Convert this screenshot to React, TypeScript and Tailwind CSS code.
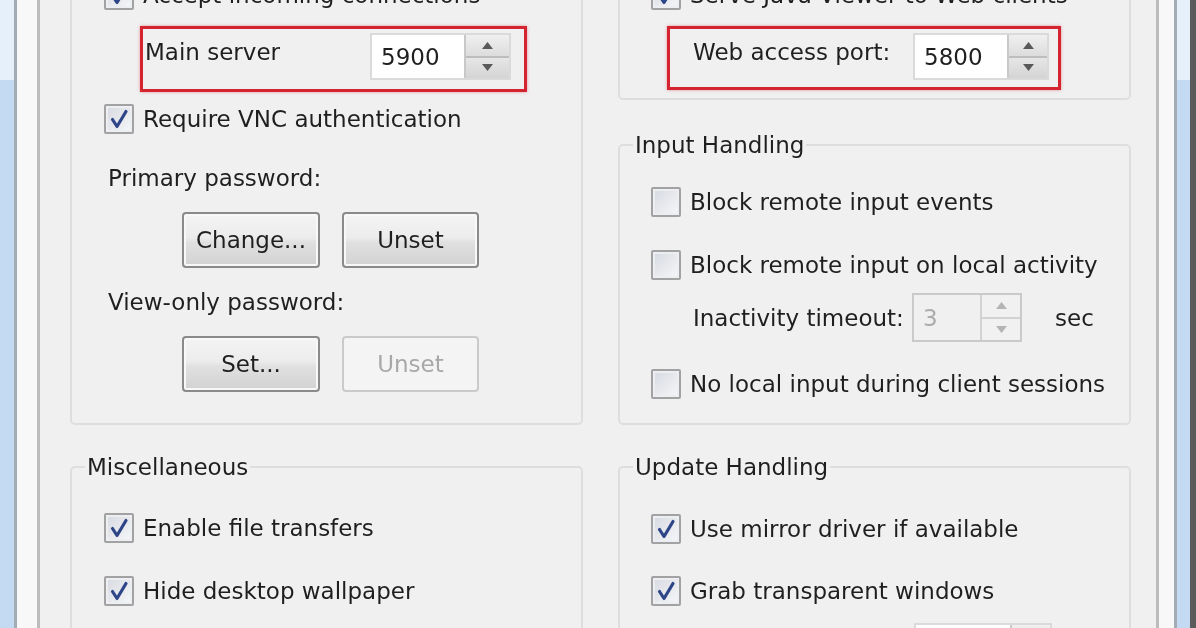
import React from 'react';

const TEXT = 'text-[#1f1f1f]';

function Check({ on }: { on?: boolean }) {
  return (
    <span className="flex h-[30px] w-[30px] shrink-0 items-center justify-center rounded-[2px] border-2 border-[#a2a2a2] bg-[linear-gradient(135deg,#d6d9e0,#f6f7f9)] shadow-[inset_0_0_0_2px_#eceef2]">
      {on && (
        <svg width="22" height="22" viewBox="0 0 22 22">
          <path
            d="M4.5 11.5 L9 18.5 L18 3.5"
            fill="none"
            stroke="#2e4588"
            strokeWidth="3.2"
            strokeLinejoin="round"
            strokeLinecap="round"
          />
        </svg>
      )}
    </span>
  );
}

function CheckRow({ on, label, className = '' }: { on?: boolean; label: string; className?: string }) {
  return (
    <div className={`flex h-[30px] items-center gap-[9px] ${className}`}>
      <Check on={on} />
      <span className="whitespace-nowrap">{label}</span>
    </div>
  );
}

function Arrow({ up, dim }: { up?: boolean; dim?: boolean }) {
  return (
    <svg width="11" height="7" viewBox="0 0 11 7">
      <polygon points={up ? '0,7 5.5,0 11,7' : '0,0 5.5,7 11,0'} fill={dim ? '#b4b4b4' : '#5a5a5a'} />
    </svg>
  );
}

function Spin({
  value,
  inputW,
  btnW,
  h,
  disabled,
}: {
  value: string;
  inputW: string;
  btnW: string;
  h: string;
  disabled?: boolean;
}) {
  return (
    <div className={`flex ${h} border-2 ${disabled ? 'border-[#cacaca]' : 'border-[#dadada]'}`}>
      <div
        className={`flex items-center pl-[9px] ${inputW} ${
          disabled ? 'bg-[#f0f0f0] text-[#acacac]' : 'bg-white'
        }`}
      >
        {value}
      </div>
      <div className={`flex flex-col ${btnW} border-l-2 ${disabled ? 'border-[#d2d2d2]' : 'border-[#c9c9c9]'}`}>
        <div
          className={`flex flex-1 items-center justify-center border-b-2 ${
            disabled
              ? 'border-[#d2d2d2] bg-[#f1f1f1]'
              : 'border-[#bdbdbd] bg-[linear-gradient(to_bottom,#f0f0f0,#dcdcdc)]'
          }`}
        >
          <Arrow up dim={disabled} />
        </div>
        <div
          className={`flex flex-1 items-center justify-center ${
            disabled ? 'bg-[#f1f1f1]' : 'bg-[linear-gradient(to_bottom,#e6e6e6,#d4d4d4)]'
          }`}
        >
          <Arrow dim={disabled} />
        </div>
      </div>
    </div>
  );
}

function Btn({ children, disabled, w = 'w-[138px]' }: { children: string; disabled?: boolean; w?: string }) {
  return (
    <div
      className={`flex h-[56px] ${w} items-center justify-center rounded-[4px] border-2 ${
        disabled
          ? 'border-[#cacaca] bg-[#f4f4f4] text-[#a8a8a8]'
          : 'border-[#8a8a8a] bg-[linear-gradient(to_bottom,#f4f4f4_0%,#ececec_45%,#e0e0e0_55%,#d2d2d2_100%)] shadow-[inset_0_0_0_2px_#f8f8f8]'
      }`}
    >
      {children}
    </div>
  );
}

function Label({ children, className = '' }: { children: string; className?: string }) {
  return <div className={`flex h-[30px] items-center whitespace-nowrap ${className}`}>{children}</div>;
}

function FrameSide({ right }: { right?: boolean }) {
  const blue = (
    <div className={`flex flex-col ${right ? 'w-[13px]' : 'w-[14px]'}`}>
      <div className="h-[80px] bg-[#e6f0fa]" />
      <div className="flex-1 bg-[#c3daf2]" />
    </div>
  );
  if (right) {
    return (
      <div className="flex h-full shrink-0">
        <div className="w-[3px] bg-[#bcbcbc]" />
        <div className="w-[15px] bg-[#f8f8f8]" />
        <div className="w-[3px] bg-[#a3abb4]" />
        {blue}
        <div className="w-[6px] bg-[#5b5b5b]" />
      </div>
    );
  }
  return (
    <div className="flex h-full shrink-0">
      {blue}
      <div className="w-[3px] bg-[#a3abb4]" />
      <div className="w-[20px] bg-[#f8f8f8]" />
      <div className="w-[3px] bg-[#bcbcbc]" />
    </div>
  );
}

export default function App() {
  return (
    <div
      className={`flex h-[628px] w-[1196px] overflow-hidden bg-[#f0f0f0] font-['DejaVu_Sans',sans-serif] text-[23px] leading-[30px] blur-[0.4px] ${TEXT}`}
    >
      <FrameSide />

      <div className="flex-1 overflow-hidden">
        <div className="-mt-[60px] flex gap-[35px] pl-[30px] pr-[25px]">
          {/* left column */}
          <div className="flex w-[513px] flex-col">
            <div className="rounded-[5px] border-2 border-[#dedede] pb-[31px] pt-[38px]">
              <CheckRow on label="Accept incoming connections" className="ml-[32px]" />
              <div className="ml-[68px] mt-[16px] flex h-[66px] w-[387px] items-start border-[3px] border-[#d3242f] pt-[4px] shadow-[0_0_3px_rgba(210,40,50,0.45)]">
                <div className="mt-[4px] w-[227px] whitespace-nowrap pl-[2px]">Main server</div>
                <Spin value="5900" inputW="w-[92px]" btnW="w-[45px]" h="h-[47px]" />
              </div>
              <CheckRow on label="Require VNC authentication" className="ml-[32px] mt-[12px]" />
              <Label className="ml-[36px] mt-[29px]">Primary password:</Label>
              <div className="ml-[110px] mt-[19px] flex gap-[22px]">
                <Btn>Change...</Btn>
                <Btn w="w-[137px]">Unset</Btn>
              </div>
              <Label className="ml-[36px] mt-[19px]">View-only password:</Label>
              <div className="ml-[110px] mt-[19px] flex gap-[22px]">
                <Btn>Set...</Btn>
                <Btn w="w-[137px]" disabled>
                  Unset
                </Btn>
              </div>
            </div>

            <fieldset className="mt-[27px] rounded-[5px] border-2 border-[#dedede] pb-[30px]">
              <legend className="ml-[13px] px-[2px] leading-[30px]">Miscellaneous</legend>
              <CheckRow on label="Enable file transfers" className="ml-[32px] mt-[31px]" />
              <CheckRow on label="Hide desktop wallpaper" className="ml-[32px] mt-[33px]" />
            </fieldset>
          </div>

          {/* right column */}
          <div className="flex w-[513px] flex-col">
            <div className="rounded-[5px] border-2 border-[#dedede] pb-[8px] pt-[38px]">
              <CheckRow on label="Serve Java Viewer to Web clients" className="ml-[31px]" />
              <div className="ml-[47px] mt-[16px] flex h-[64px] w-[394px] items-start border-[3px] border-[#d3242f] pt-[4px] shadow-[0_0_3px_rgba(210,40,50,0.45)]">
                <div className="mt-[4px] w-[243px] whitespace-nowrap pl-[23px]">Web access port:</div>
                <Spin value="5800" inputW="w-[92px]" btnW="w-[40px]" h="h-[47px]" />
              </div>
            </div>

            <fieldset className="mt-[30px] rounded-[5px] border-2 border-[#dedede] pb-[24px]">
              <legend className="ml-[13px] px-[2px] leading-[30px]">Input Handling</legend>
              <CheckRow label="Block remote input events" className="ml-[31px] mt-[27px]" />
              <CheckRow label="Block remote input on local activity" className="ml-[31px] mt-[33px]" />
              <div className="ml-[73px] mt-[13px] flex items-center">
                <div className="w-[219px] whitespace-nowrap">Inactivity timeout:</div>
                <Spin value="3" inputW="w-[66px]" btnW="w-[40px]" h="h-[49px]" disabled />
                <div className="ml-[33px]">sec</div>
              </div>
              <CheckRow label="No local input during client sessions" className="ml-[31px] mt-[27px]" />
            </fieldset>

            <fieldset className="mt-[27px] rounded-[5px] border-2 border-[#dedede] pb-[30px]">
              <legend className="ml-[13px] px-[2px] leading-[30px]">Update Handling</legend>
              <CheckRow on label="Use mirror driver if available" className="ml-[31px] mt-[32px]" />
              <CheckRow on label="Grab transparent windows" className="ml-[31px] mt-[32px]" />
              <div className="ml-[294px] mt-[17px] flex">
                <Spin value="" inputW="w-[94px]" btnW="w-[40px]" h="h-[49px]" />
              </div>
            </fieldset>
          </div>
        </div>
      </div>

      <FrameSide right />
    </div>
  );
}
